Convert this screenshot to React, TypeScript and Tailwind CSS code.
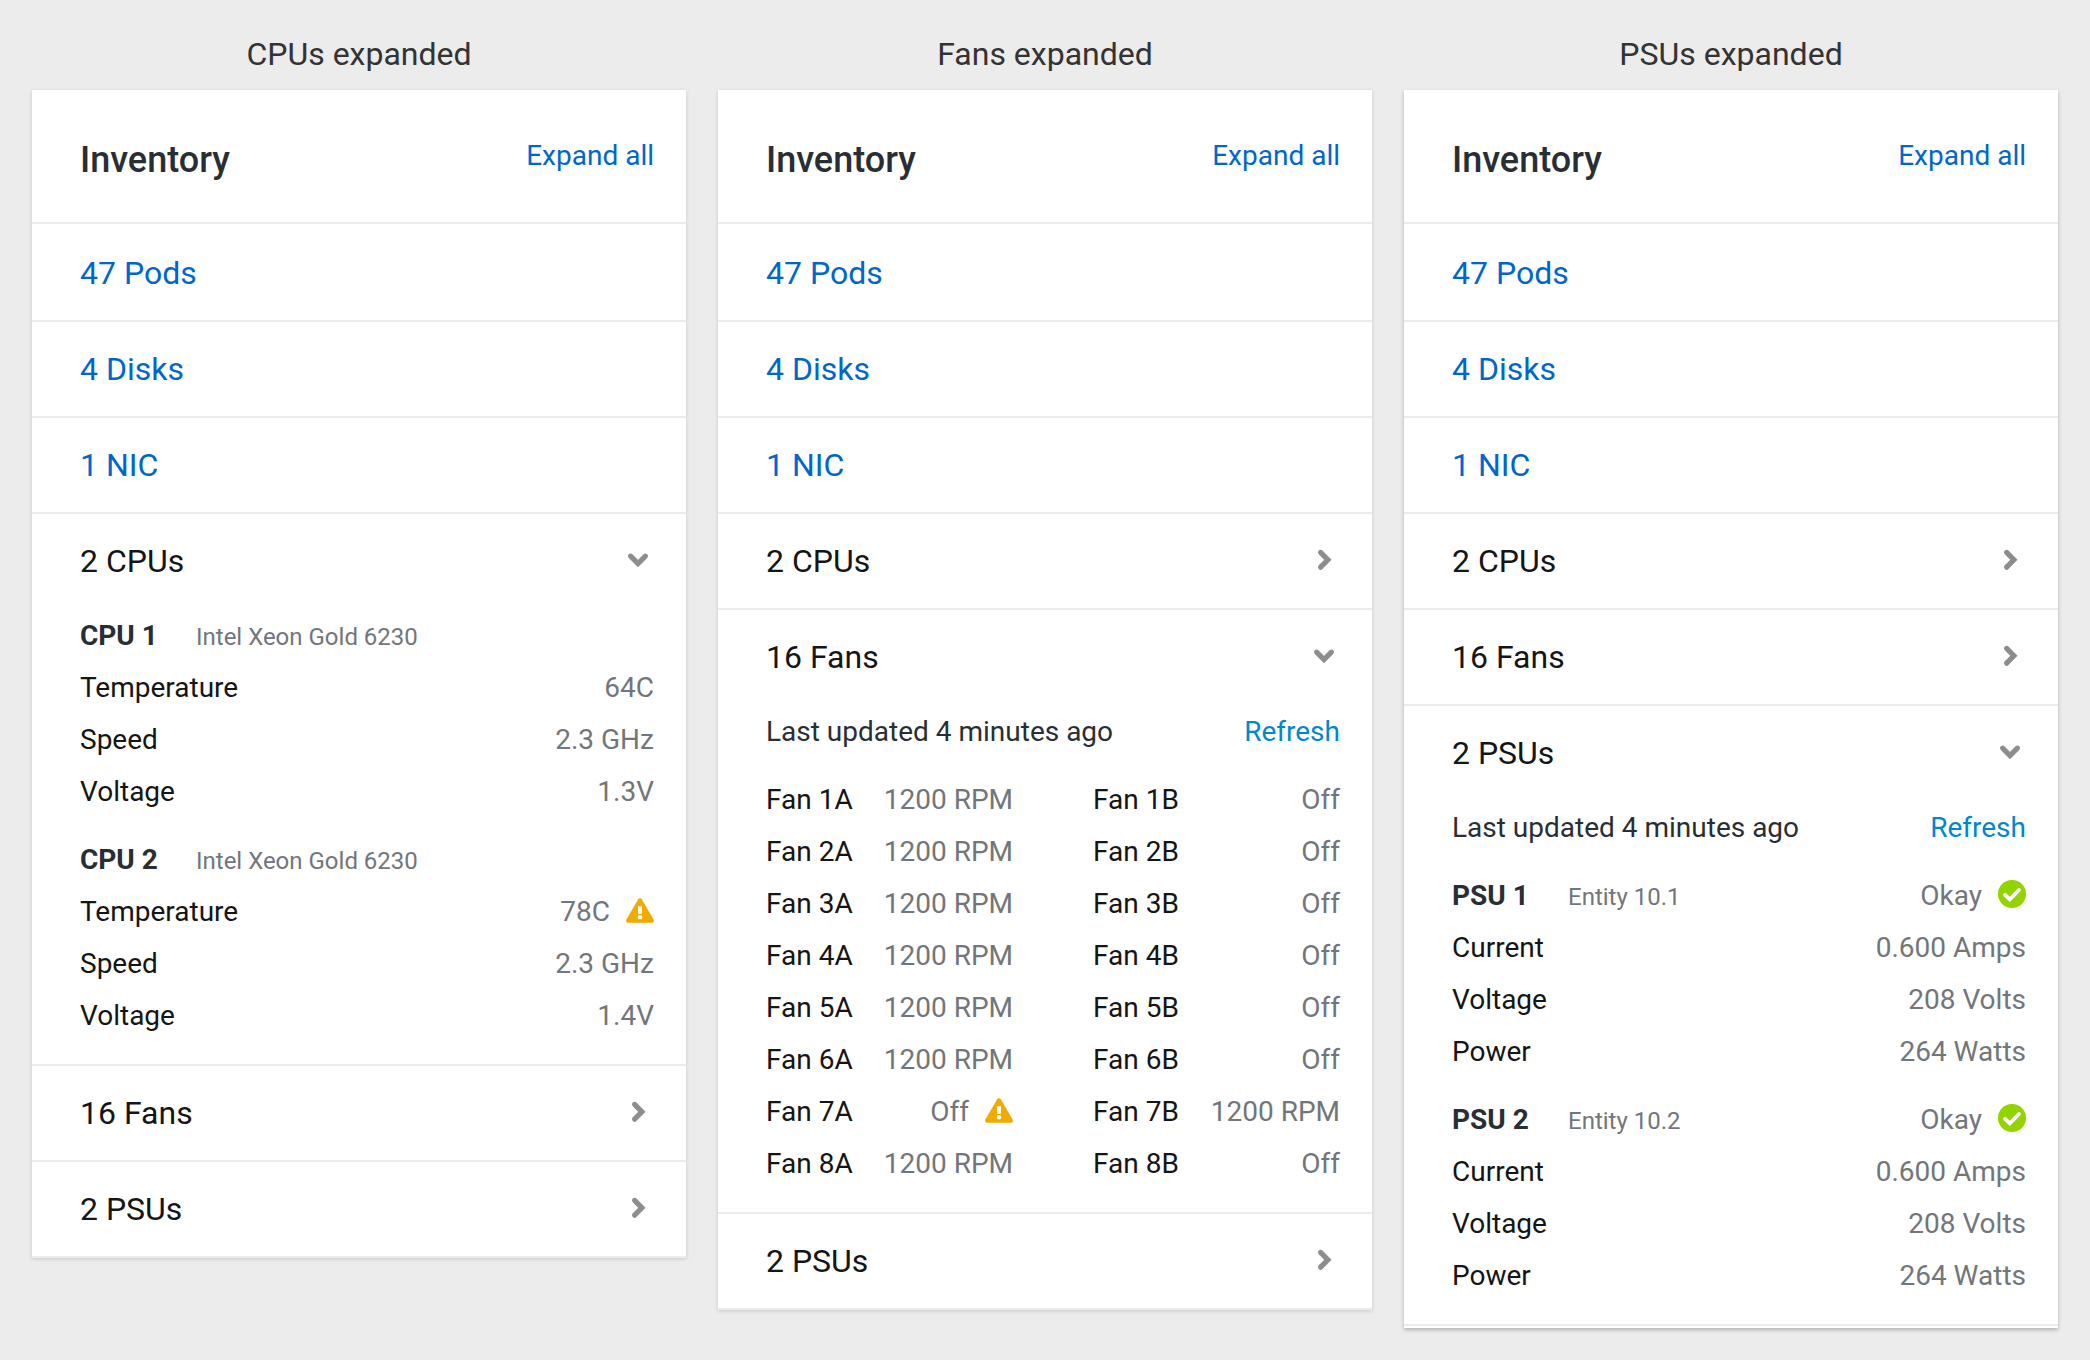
import { useState } from "react";

type Reading = { label: string; value: string; warning?: boolean };
type Unit = { name: string; detail: string; status?: string; readings: Reading[] };
type Section = "cpus" | "fans" | "psus";

const links = ["47 Pods", "4 Disks", "1 NIC"];

const cpus: Unit[] = [
  {
    name: "CPU 1",
    detail: "Intel Xeon Gold 6230",
    readings: [
      { label: "Temperature", value: "64C" },
      { label: "Speed", value: "2.3 GHz" },
      { label: "Voltage", value: "1.3V" },
    ],
  },
  {
    name: "CPU 2",
    detail: "Intel Xeon Gold 6230",
    readings: [
      { label: "Temperature", value: "78C", warning: true },
      { label: "Speed", value: "2.3 GHz" },
      { label: "Voltage", value: "1.4V" },
    ],
  },
];

const psuReadings: Reading[] = [
  { label: "Current", value: "0.600 Amps" },
  { label: "Voltage", value: "208 Volts" },
  { label: "Power", value: "264 Watts" },
];

const psus: Unit[] = [
  { name: "PSU 1", detail: "Entity 10.1", status: "Okay", readings: psuReadings },
  { name: "PSU 2", detail: "Entity 10.2", status: "Okay", readings: psuReadings },
];

const fans: Reading[] = [1, 2, 3, 4, 5, 6, 7, 8].flatMap((n) => [
  { label: `Fan ${n}A`, value: n === 7 ? "Off" : "1200 RPM", warning: n === 7 },
  { label: `Fan ${n}B`, value: n === 7 ? "1200 RPM" : "Off" },
]);

function Chevron({ open }: { open: boolean }) {
  return (
    <svg viewBox="0 0 32 32" className="size-8 shrink-0" fill="none" stroke="#8b8d8f" strokeWidth="5.2" strokeLinecap="round" aria-hidden="true">
      <path d={open ? "M8.6 11.2 L16 18.6 L23.4 11.2" : "M12.6 7.4 L19.9 14.8 L12.6 22.2"} />
    </svg>
  );
}

function WarningIcon() {
  return (
    <svg viewBox="0 0 28 25" className="mb-1 h-[25px] w-7 shrink-0" role="img" aria-label="Warning">
      <path
        d="M12.2 1.2 C13 -0.1 15 -0.1 15.8 1.2 L27.6 21.6 C28.4 23 27.5 24.7 25.9 24.7 H2.1 C0.5 24.7 -0.4 23 0.4 21.6 Z"
        fill="#f0ab00"
      />
      <path d="M11.9 8.2 H16.1 L15.8 16 H12.2 Z" fill="#fff" />
      <circle cx="14" cy="19.3" r="2.3" fill="#fff" />
    </svg>
  );
}

function OkayIcon() {
  return (
    <svg viewBox="0 0 28 28" className="mb-1 size-7 shrink-0" aria-hidden="true">
      <circle cx="14" cy="14" r="14" fill="#92d400" />
      <path
        d="M7 14.8 L11.8 19.4 L21 10"
        fill="none"
        stroke="#fff"
        strokeWidth="3.8"
        strokeLinecap="round"
      />
    </svg>
  );
}

function ReadingRow({ reading }: { reading: Reading }) {
  return (
    <div className="flex h-13 items-center justify-between">
      <dt className="text-[#151515]">{reading.label}</dt>
      <dd className="flex items-center gap-4 text-[#72767b]">
        {reading.value}
        {reading.warning && <WarningIcon />}
      </dd>
    </div>
  );
}

function UnitList({ units }: { units: Unit[] }) {
  return (
    <div className="flex flex-col gap-4">
      {units.map((unit) => (
        <section key={unit.name}>
          <div className="flex h-13 items-center justify-between">
            <div className="flex items-baseline">
              <h3 className="w-29 font-bold text-[#292e34]">{unit.name}</h3>
              <span className="text-2xl text-[#72767b]">{unit.detail}</span>
            </div>
            {unit.status && (
              <span className="flex items-center gap-4 text-[#72767b]">
                {unit.status}
                <OkayIcon />
              </span>
            )}
          </div>
          <dl>
            {unit.readings.map((reading) => (
              <ReadingRow key={reading.label} reading={reading} />
            ))}
          </dl>
        </section>
      ))}
    </div>
  );
}

function Updated() {
  return (
    <div className="mb-4 flex h-13 items-center justify-between">
      <p className="text-[#292e34]">Last updated 4 minutes ago</p>
      <button type="button" className="text-[#0088ce]">
        Refresh
      </button>
    </div>
  );
}

function SectionBody({ id }: { id: Section }) {
  return (
    <div className="pr-8 pb-[22px] pl-12 text-[28px] leading-10">
      {id === "cpus" && <UnitList units={cpus} />}
      {id === "fans" && (
        <>
          <Updated />
          <dl className="grid grid-cols-2 gap-x-20">
            {fans.map((fan) => (
              <ReadingRow key={fan.label} reading={fan} />
            ))}
          </dl>
        </>
      )}
      {id === "psus" && (
        <>
          <Updated />
          <UnitList units={psus} />
        </>
      )}
    </div>
  );
}

const sections: { id: Section; title: string }[] = [
  { id: "cpus", title: "2 CPUs" },
  { id: "fans", title: "16 Fans" },
  { id: "psus", title: "2 PSUs" },
];

function InventoryCard({ title, initial }: { title: string; initial: Section }) {
  const [open, setOpen] = useState<Section[]>([initial]);
  const toggle = (id: Section) =>
    setOpen((current) => (current.includes(id) ? current.filter((other) => other !== id) : [...current, id]));

  return (
    <section className="min-w-0 flex-1">
      <h1 className="pt-[34px] pb-4 text-center text-[32px] leading-10 text-[#333333]">{title}</h1>
      <div
        className={
          initial === "psus"
            ? "bg-white pb-[2px] shadow-[0_2px_4px_rgba(3,3,3,0.25)]"
            : "bg-white shadow-[0_1px_4px_rgba(3,3,3,0.16)]"
        }
      >
        <header className="flex items-start justify-between border-b-2 border-[#ececec] pt-[46px] pr-8 pb-[38px] pl-12">
          <h2 className="text-4xl leading-12 font-medium text-[#292e34]">Inventory</h2>
          <button
            type="button"
            className="text-[28px] leading-10 text-[#0066cc]"
            onClick={() => setOpen(["cpus", "fans", "psus"])}
          >
            Expand all
          </button>
        </header>
        <ul className="pt-[2px] text-[32px] leading-10">
          {links.map((link) => (
            <li key={link} className="flex h-24 items-center border-b-2 border-[#ececec] px-12">
              <a href="#" className="text-[#0066cc]">
                {link}
              </a>
            </li>
          ))}
          {sections.map(({ id, title: label }) => {
            const expanded = open.includes(id);
            return (
              <li key={id} className="border-b-2 border-[#ececec]">
                <button
                  type="button"
                  aria-expanded={expanded}
                  onClick={() => toggle(id)}
                  className={
                    expanded
                      ? "flex h-24 w-full items-center justify-between pr-8 pb-[2px] pl-12 text-left text-[#151515]"
                      : "flex h-[94px] w-full items-center justify-between pr-8 pl-12 text-left text-[#151515]"
                  }
                >
                  {label}
                  <Chevron open={expanded} />
                </button>
                {expanded && <SectionBody id={id} />}
              </li>
            );
          })}
        </ul>
      </div>
    </section>
  );
}

export default function App() {
  return (
    <main className="flex min-h-screen items-start gap-8 bg-[#ececec] px-8 pb-8 font-[Roboto,sans-serif]">
      <InventoryCard title="CPUs expanded" initial="cpus" />
      <InventoryCard title="Fans expanded" initial="fans" />
      <InventoryCard title="PSUs expanded" initial="psus" />
    </main>
  );
}
